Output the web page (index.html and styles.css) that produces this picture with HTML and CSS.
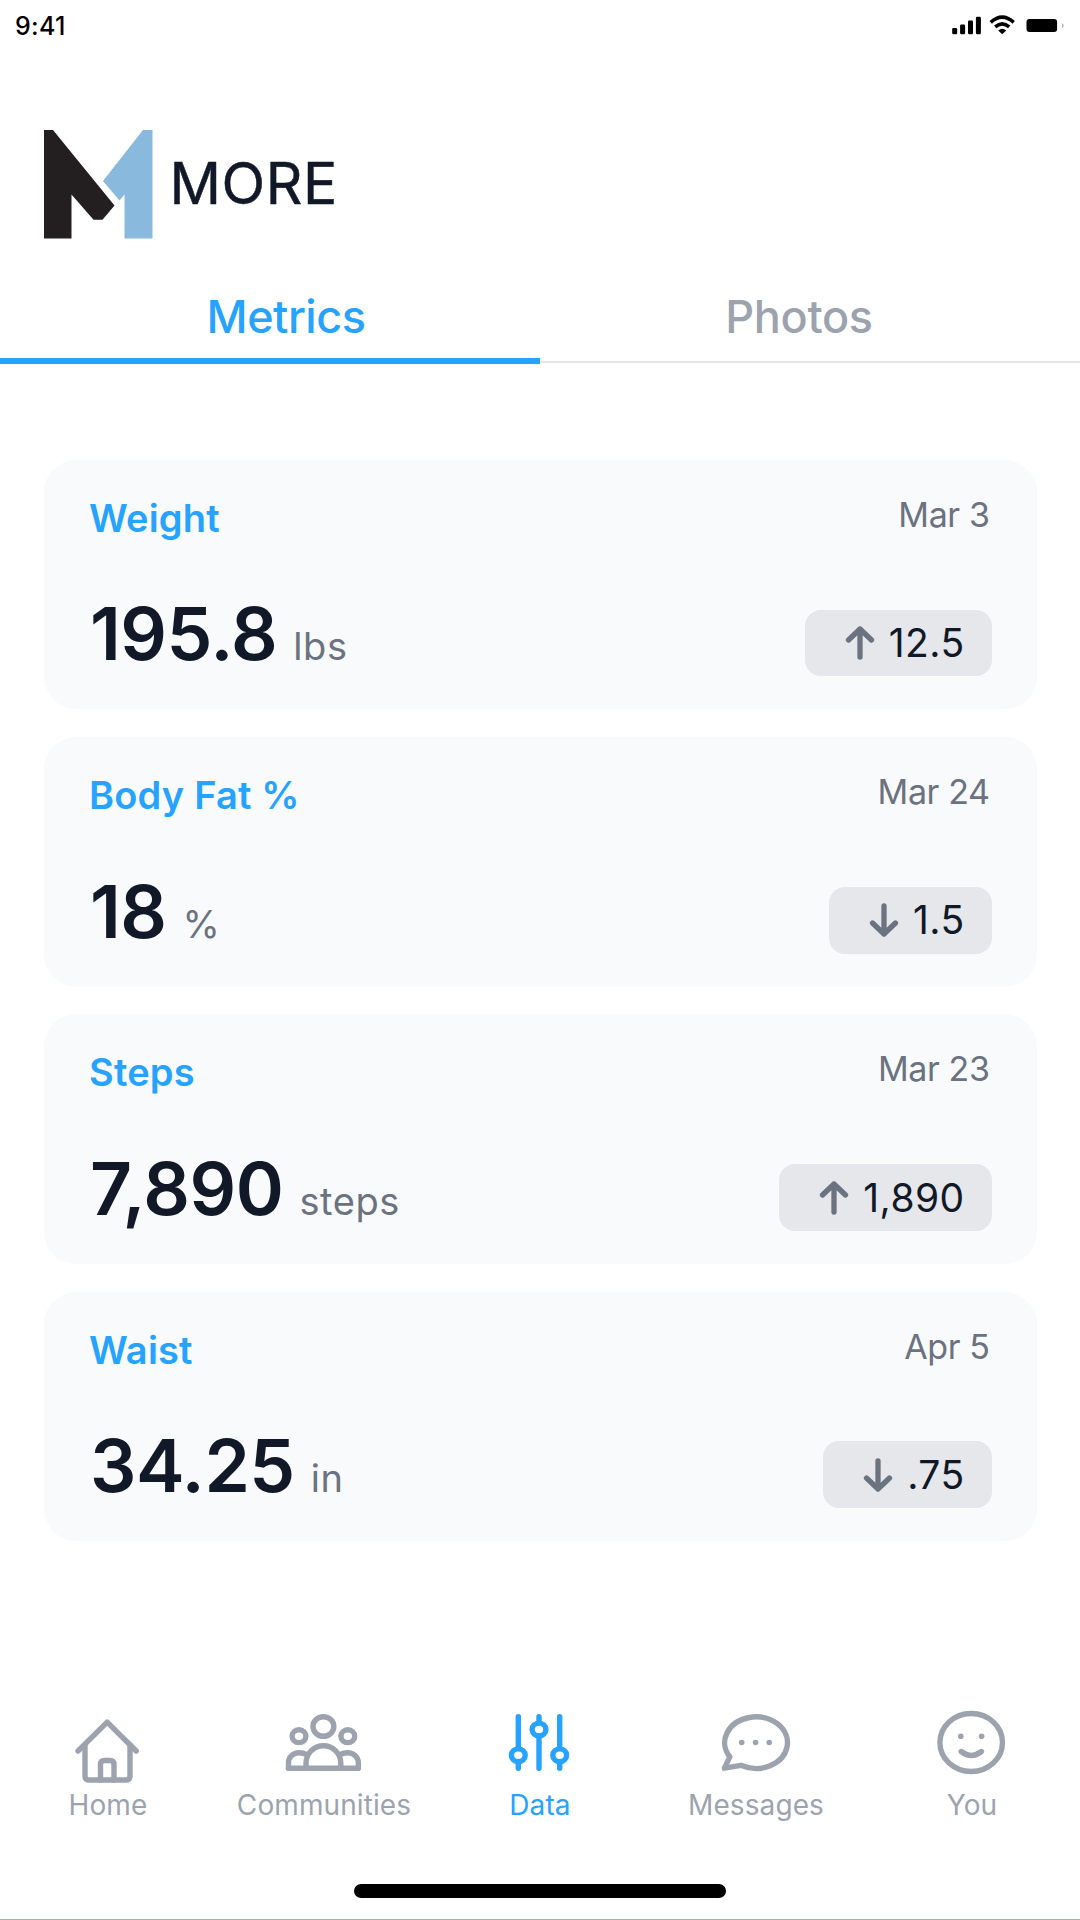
FILE: index.html
```html
<!DOCTYPE html>
<html lang="en">
<head>
  <meta charset="UTF-8" />
  <meta name="viewport" content="width=device-width, initial-scale=1.0"/>
  <title>MORE - Metrics</title>
  <link rel="stylesheet" href="styles.css">
</head>
<body>
  <div class="screen">
    <div class="status-bar">
      <span class="time">9:41</span>
      <svg class="status-icons" width="120" height="24" viewBox="0 0 120 24">
        <rect x="2.2" y="15" width="5" height="6.3" rx="1.3"/>
        <rect x="10.1" y="11.5" width="5" height="9.8" rx="1.3"/>
        <rect x="18" y="7.6" width="5" height="13.7" rx="1.3"/>
        <rect x="25.9" y="3.7" width="5" height="17.6" rx="1.3"/>
        <path class="wave" d="M40.7 9.3 Q52.2 -0.9 63.7 9.3"/>
        <path class="wave" d="M45.2 13.9 Q52.2 7.9 59.2 13.9"/>
        <path d="M48.2 17.4 Q52.2 14.2 56.2 17.4 L52.2 21.3 Z"/>
        <rect x="76.5" y="6" width="30.6" height="13" rx="3"/>
        <path class="nub" d="M112 10 Q115.6 12.5 112 15.5 Z"/>
      </svg>
    </div>

    <header class="brand">
      <svg class="logo" width="109" height="109" viewBox="0 0 109 109">
        <path fill="#231f20" d="M0 0 H9 L70.5 75.5 L58.5 89.7 H49.5 L27.5 64.5 V108.5 H0 Z"/>
        <path fill="#89b9dc" d="M99 0 H108.5 V108.5 H80.5 V64.5 L75.5 70.5 L59 51 Z"/>
      </svg>
      <h1>MORE</h1>
    </header>

    <nav class="tabs">
      <a class="tab active">Metrics</a>
      <a class="tab">Photos</a>
    </nav>

    <main class="cards">
      <section class="card">
        <div class="row">
          <h2>Weight</h2>
          <span class="date">Mar 3</span>
        </div>
        <div class="row">
          <div class="reading"><span class="value">195.8</span><span class="unit">lbs</span></div>
          <div class="change">
            <svg width="30" height="36" viewBox="0 0 30 36"><path d="M15 32 V4 M3.5 15 L15 4 L26.5 15"/></svg>
            <span>12.5</span>
          </div>
        </div>
      </section>

      <section class="card">
        <div class="row">
          <h2>Body Fat %</h2>
          <span class="date">Mar 24</span>
        </div>
        <div class="row">
          <div class="reading"><span class="value">18</span><span class="unit">%</span></div>
          <div class="change">
            <svg width="30" height="36" viewBox="0 0 30 36"><path d="M15 4 V32 M3.5 21 L15 32 L26.5 21"/></svg>
            <span>1.5</span>
          </div>
        </div>
      </section>

      <section class="card">
        <div class="row">
          <h2>Steps</h2>
          <span class="date">Mar 23</span>
        </div>
        <div class="row">
          <div class="reading"><span class="value">7,890</span><span class="unit">steps</span></div>
          <div class="change">
            <svg width="30" height="36" viewBox="0 0 30 36"><path d="M15 32 V4 M3.5 15 L15 4 L26.5 15"/></svg>
            <span>1,890</span>
          </div>
        </div>
      </section>

      <section class="card">
        <div class="row">
          <h2>Waist</h2>
          <span class="date">Apr 5</span>
        </div>
        <div class="row">
          <div class="reading"><span class="value">34.25</span><span class="unit">in</span></div>
          <div class="change">
            <svg width="30" height="36" viewBox="0 0 30 36"><path d="M15 4 V32 M3.5 21 L15 32 L26.5 21"/></svg>
            <span>.75</span>
          </div>
        </div>
      </section>
    </main>

    <nav class="bottom-nav">
      <a class="nav-item">
        <svg width="72" height="76" viewBox="0 0 72 76">
          <path d="M7 41 L36.2 12.2 L65.2 41"/>
          <path d="M14 35 V66 Q14 70 18 70 H55 Q59 70 59 66 V35"/>
          <path d="M29.5 70 V54.5 Q29.5 50.5 33.5 50.5 H39 Q43 50.5 43 54.5 V70"/>
        </svg>
        <span>Home</span>
      </a>
      <a class="nav-item">
        <svg width="80" height="76" viewBox="0 0 80 76">
          <ellipse cx="40.4" cy="16.5" rx="10.4" ry="9.8"/>
          <ellipse cx="16" cy="26.2" rx="6.9" ry="6.4"/>
          <ellipse cx="64.8" cy="26.2" rx="6.9" ry="6.4"/>
          <path d="M5.5 58.3 V52.3 A10.5 9.8 0 0 1 16 42.7 Q20.5 42.7 24 44.8"/>
          <path d="M75.3 58.3 V52.3 A10.5 9.8 0 0 0 64.8 42.7 Q60.3 42.7 56.8 44.8"/>
          <path d="M23 58 V53 A17.4 17.2 0 0 1 57.8 53 V58"/>
          <path d="M5.5 58.3 H75.3"/>
        </svg>
        <span>Communities</span>
      </a>
      <a class="nav-item active">
        <svg width="72" height="76" viewBox="0 0 72 76">
          <path d="M15.3 6.7 V38 M15.3 52 V58.3 M36 6.7 V12 M36 26 V58.3 M56.7 6.7 V38 M56.7 52 V58.3"/>
          <ellipse cx="15.3" cy="45.3" rx="6.9" ry="6.4"/>
          <ellipse cx="36" cy="19.5" rx="6.9" ry="6.4"/>
          <ellipse cx="56.7" cy="45.3" rx="6.9" ry="6.4"/>
        </svg>
        <span>Data</span>
      </a>
      <a class="nav-item">
        <svg width="72" height="76" viewBox="0 0 72 76">
          <path d="M10.8 46.8 A31.4 25.8 0 1 1 22 55.3 L5.4 58.2 Z"/>
          <g class="dots"><circle cx="22.7" cy="32.5" r="2.8"/><circle cx="36.6" cy="32.5" r="2.8"/><circle cx="50.2" cy="32.5" r="2.8"/></g>
        </svg>
        <span>Messages</span>
      </a>
      <a class="nav-item">
        <svg width="72" height="76" viewBox="0 0 72 76">
          <ellipse cx="36.2" cy="32.5" rx="31.3" ry="29"/>
          <path d="M26.2 41.5 Q36.3 49.3 46.4 41.5"/>
          <g class="dots"><circle cx="25.8" cy="26.2" r="2.8"/><circle cx="46.6" cy="26.2" r="2.8"/></g>
        </svg>
        <span>You</span>
      </a>
    </nav>

    <div class="home-indicator"></div>
  </div>
</body>
</html>
```
FILE: styles.css
```css
* {
  box-sizing: border-box;
  margin: 0;
  padding: 0;
}

body {
  font-family: 'Inter', sans-serif;
  background: #ffffff;
  color: #111827;
}

.screen {
  width: 1080px;
  height: 1920px;
  display: flex;
  flex-direction: column;
  border-bottom: 1px solid #7fbdf0;
}

.status-bar {
  height: 130px;
  padding: 13px 10px 0 15px;
  display: flex;
  align-items: flex-start;
  justify-content: space-between;
  color: #000;
}

.time {
  font-size: 25px;
  line-height: 26px;
  font-weight: 500;
  letter-spacing: 0.3px;
}

.wave {
  fill: none;
  stroke: #000;
  stroke-width: 3.6;
}

.nub {
  fill: #b5b5b5;
}

.brand {
  height: 150px;
  padding-left: 43.5px;
  display: flex;
  align-items: flex-start;
  gap: 17px;
}

.brand h1 {
  font-size: 57px;
  line-height: 68px;
  font-weight: 400;
  letter-spacing: 0.6px;
  -webkit-text-stroke: 0.5px #111827;
  margin-top: 20px;
}

.tabs {
  height: 84px;
  display: flex;
}

.tab {
  width: 540px;
  text-align: center;
  font-size: 45px;
  line-height: 74px;
  font-weight: 500;
  letter-spacing: -0.3px;
  color: #9ca3af;
  border-bottom: 2px solid #e5e7eb;
  height: 83px;
  padding-right: 22px;
}

.tab.active {
  color: #26a2ff;
  border-bottom: 6px solid #26a2ff;
  height: 84px;
  padding: 0 0 0 32px;
  letter-spacing: -0.5px;
}

.cards {
  padding: 96px 43.5px 0 44px;
  display: flex;
  flex-direction: column;
  gap: 27.8px;
}

.card {
  height: 249.4px;
  padding: 36px 45px 33px 45px;
  border-radius: 32px;
  background: #f9fafc;
  display: flex;
  flex-direction: column;
  justify-content: space-between;
}

.row {
  display: flex;
  justify-content: space-between;
  align-items: flex-end;
}

.row:first-child {
  align-items: flex-start;
}

.card h2 {
  font-size: 38px;
  line-height: 45px;
  font-weight: 600;
  letter-spacing: 0.2px;
  color: #26a2ff;
}

.date {
  font-size: 34px;
  line-height: 38px;
  letter-spacing: -0.4px;
  color: #6b7280;
  padding-right: 2px;
}

.reading {
  display: flex;
  align-items: baseline;
  gap: 16px;
  line-height: 80px;
  padding-left: 1px;
  margin-bottom: -10px;
}

.value {
  font-size: 73px;
  font-weight: 600;
  letter-spacing: -0.5px;
}

.unit {
  font-size: 38px;
  letter-spacing: 0.6px;
  color: #6b7280;
}

.change {
  height: 66.5px;
  padding: 0 27px 0 40px;
  border-radius: 16px;
  background: #e5e7eb;
  display: flex;
  align-items: center;
  gap: 14px;
  font-size: 39px;
  letter-spacing: 0.4px;
}

.change span {
  padding-bottom: 1px;
}

.change svg {
  fill: none;
  stroke: #6b7280;
  stroke-width: 5.3;
  stroke-linecap: round;
  stroke-linejoin: round;
}

.bottom-nav {
  margin-top: auto;
  height: 174px;
  display: grid;
  grid-template-columns: repeat(5, 1fr);
}

.nav-item {
  display: flex;
  flex-direction: column;
  align-items: center;
  color: #9ca3af;
  font-size: 28px;
  line-height: 38px;
  letter-spacing: 0.1px;
}

.nav-item.active {
  color: #26a2ff;
}

.nav-item svg {
  fill: none;
  stroke: currentColor;
  stroke-width: 5.4;
  stroke-linecap: round;
  stroke-linejoin: round;
  margin-right: 2px;
}

.dots {
  fill: currentColor;
  stroke: none;
}

.home-indicator {
  width: 372px;
  height: 14px;
  margin: 0 auto 21px;
  border-radius: 7px;
  background: #000;
}
```
